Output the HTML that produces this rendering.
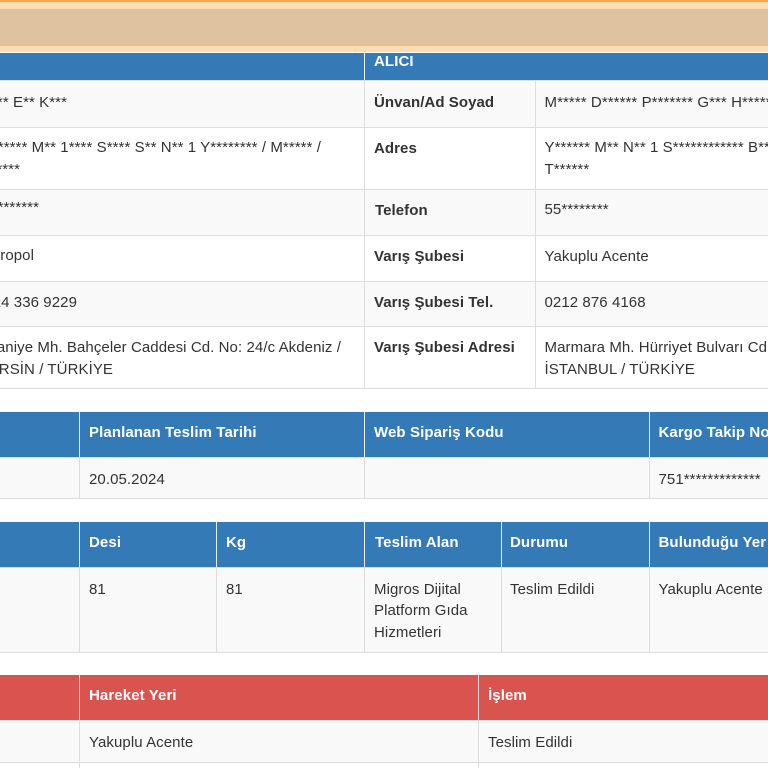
<!DOCTYPE html>
<html><head><meta charset="utf-8"><style>
html,body{margin:0;padding:0;background:#fff}
body{width:768px;height:768px;overflow:hidden;position:relative;font-family:"Liberation Sans",Arial,sans-serif;font-size:15px;color:#333;letter-spacing:.08px}
div{position:absolute}
.t{white-space:nowrap;line-height:21px}
.h{font-weight:bold;color:#fff;letter-spacing:.1px}
.b{font-weight:bold;color:#333;letter-spacing:.07px}
.g{background:#f9f9f9;left:0;width:768px}
.hl{left:0;width:768px;height:1px;background:#ddd}
.vl{width:1px;background:#ddd}
.vw{width:1px;background:#e8eff6}
</style></head><body>
<div style="left:0;top:0;width:768px;height:2px;background:#f5a742"></div>
<div style="left:0;top:2px;width:768px;height:7px;background:#fdddb3"></div>
<div style="left:0;top:9px;width:768px;height:37px;background:#dfc39f"></div>
<div style="left:0;top:46px;width:768px;height:6px;background:#fddcb2"></div>

<!-- table 1 -->
<div style="left:0;top:53px;width:768px;height:27px;background:#337ab7"></div>
<div class="vw" style="left:364px;top:53px;height:27px"></div>
<div class="t h" style="left:374px;top:51px">ALICI</div>
<div class="g" style="top:81px;height:46px"></div>
<div class="g" style="top:190px;height:45px"></div>
<div class="g" style="top:282px;height:44px"></div>
<div class="hl" style="top:80px"></div>
<div class="hl" style="top:127px"></div>
<div class="hl" style="top:189px"></div>
<div class="hl" style="top:235px"></div>
<div class="hl" style="top:281px"></div>
<div class="hl" style="top:326px"></div>
<div class="hl" style="top:388px"></div>
<div class="vl" style="left:364px;top:81px;height:308px"></div>
<div class="vl" style="left:535px;top:81px;height:308px"></div>

<div class="t" style="right:701px;top:92px">** E** K***</div>
<div class="t" style="right:447px;top:137px">***** M** 1**** S**** S** N** 1 Y******** / M***** /</div>
<div class="t" style="right:748px;top:159px">*****</div>
<div class="t" style="right:729px;top:197px">55********</div>
<div class="t" style="right:734px;top:245px">Metropol</div>
<div class="t" style="right:691px;top:292px">0324 336 9229</div>
<div class="t" style="right:427px;top:337px">Osmaniye Mh. Bahçeler Caddesi Cd. No: 24/c Akdeniz /</div>
<div class="t" style="right:655px;top:359px">MERSİN / TÜRKİYE</div>

<div class="t b" style="left:374px;top:92px">Ünvan/Ad Soyad</div>
<div class="t b" style="left:374px;top:138px">Adres</div>
<div class="t b" style="left:375px;top:200px">Telefon</div>
<div class="t b" style="left:374px;top:246px">Varış Şubesi</div>
<div class="t b" style="left:374px;top:292px">Varış Şubesi Tel.</div>
<div class="t b" style="left:374px;top:337px">Varış Şubesi Adresi</div>

<div class="t" style="left:544.5px;top:92px">M***** D****** P******* G*** H*****</div>
<div class="t" style="left:544.5px;top:137px">Y****** M** N** 1 S************ B***</div>
<div class="t" style="left:544.5px;top:159px">T******</div>
<div class="t" style="left:544.5px;top:199px">55********</div>
<div class="t" style="left:544.5px;top:246px">Yakuplu Acente</div>
<div class="t" style="left:544.5px;top:292px">0212 876 4168</div>
<div class="t" style="left:544.5px;top:337px">Marmara Mh. Hürriyet Bulvarı Cd.</div>
<div class="t" style="left:544.5px;top:359px">İSTANBUL / TÜRKİYE</div>

<!-- table 2 -->
<div style="left:0;top:412px;width:768px;height:45px;background:#337ab7"></div>
<div class="vw" style="left:79px;top:412px;height:45px"></div>
<div class="vw" style="left:364px;top:412px;height:45px"></div>
<div class="vw" style="left:649px;top:412px;height:45px"></div>
<div class="t h" style="left:89px;top:422px">Planlanan Teslim Tarihi</div>
<div class="t h" style="left:374px;top:422px">Web Sipariş Kodu</div>
<div class="t h" style="left:658.5px;top:422px">Kargo Takip No</div>
<div class="hl" style="top:457px"></div>
<div class="g" style="top:458px;height:40px"></div>
<div class="hl" style="top:498px"></div>
<div class="vl" style="left:79px;top:458px;height:41px"></div>
<div class="vl" style="left:364px;top:458px;height:41px"></div>
<div class="vl" style="left:649px;top:458px;height:41px"></div>
<div class="t" style="left:89px;top:469px">20.05.2024</div>
<div class="t" style="left:658.5px;top:469px">751*************</div>

<!-- table 3 -->
<div style="left:0;top:522px;width:768px;height:45px;background:#337ab7"></div>
<div class="vw" style="left:79px;top:522px;height:45px"></div>
<div class="vw" style="left:216px;top:522px;height:45px"></div>
<div class="vw" style="left:364px;top:522px;height:45px"></div>
<div class="vw" style="left:501px;top:522px;height:45px"></div>
<div class="vw" style="left:649px;top:522px;height:45px"></div>
<div class="t h" style="left:89px;top:532px">Desi</div>
<div class="t h" style="left:226px;top:532px">Kg</div>
<div class="t h" style="left:375px;top:532px">Teslim Alan</div>
<div class="t h" style="left:510px;top:532px">Durumu</div>
<div class="t h" style="left:658.5px;top:532px">Bulunduğu Yer</div>
<div class="hl" style="top:567px"></div>
<div class="g" style="top:568px;height:84px"></div>
<div class="hl" style="top:652px"></div>
<div class="vl" style="left:79px;top:568px;height:85px"></div>
<div class="vl" style="left:216px;top:568px;height:85px"></div>
<div class="vl" style="left:364px;top:568px;height:85px"></div>
<div class="vl" style="left:501px;top:568px;height:85px"></div>
<div class="vl" style="left:649px;top:568px;height:85px"></div>
<div class="t" style="left:89px;top:579px">81</div>
<div class="t" style="left:226px;top:579px">81</div>
<div class="t" style="left:374px;top:579px">Migros Dijital</div>
<div class="t" style="left:374px;top:600px">Platform Gıda</div>
<div class="t" style="left:374px;top:622px">Hizmetleri</div>
<div class="t" style="left:510px;top:579px">Teslim Edildi</div>
<div class="t" style="left:658.5px;top:579px">Yakuplu Acente</div>

<!-- table 4 -->
<div style="left:0;top:675px;width:768px;height:45px;background:#d9534f"></div>
<div class="vw" style="left:79px;top:675px;height:45px;background:#f3dcdb"></div>
<div class="vw" style="left:478px;top:675px;height:45px;background:#f3dcdb"></div>
<div class="t h" style="left:89px;top:685px">Hareket Yeri</div>
<div class="t h" style="left:488px;top:685px">İşlem</div>
<div class="hl" style="top:720px"></div>
<div class="g" style="top:721px;height:41px"></div>
<div class="hl" style="top:762px"></div>
<div class="vl" style="left:79px;top:721px;height:47px"></div>
<div class="vl" style="left:478px;top:721px;height:47px"></div>
<div class="t" style="left:89px;top:732px">Yakuplu Acente</div>
<div class="t" style="left:488px;top:732px">Teslim Edildi</div>
</body></html>
